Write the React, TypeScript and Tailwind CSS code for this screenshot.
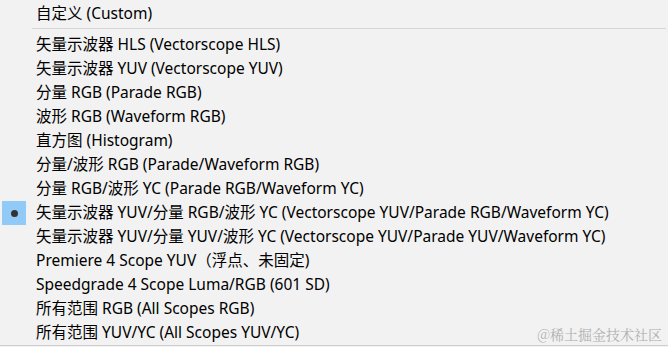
const items = [
  "矢量示波器 HLS (Vectorscope HLS)",
  "矢量示波器 YUV (Vectorscope YUV)",
  "分量 RGB (Parade RGB)",
  "波形 RGB (Waveform RGB)",
  "直方图 (Histogram)",
  "分量/波形 RGB (Parade/Waveform RGB)",
  "分量 RGB/波形 YC (Parade RGB/Waveform YC)",
  "矢量示波器 YUV/分量 RGB/波形 YC (Vectorscope YUV/Parade RGB/Waveform YC)",
  "矢量示波器 YUV/分量 YUV/波形 YC (Vectorscope YUV/Parade YUV/Waveform YC)",
  "Premiere 4 Scope YUV（浮点、未固定)",
  "Speedgrade 4 Scope Luma/RGB (601 SD)",
  "所有范围 RGB (All Scopes RGB)",
  "所有范围 YUV/YC (All Scopes YUV/YC)",
];

const checked = 7;

function Row({ label, selected }: { label: string; selected?: boolean }) {
  return (
    <div className="flex h-[24px] items-center">
      <div className="flex w-[36px] shrink-0 items-center pl-[2px]">
        {selected && (
          <div className="flex h-[24px] w-[24px] items-center justify-center bg-[#91c9f7]">
            <div className="h-[7px] w-[7px] rounded-full bg-[#333]"></div>
          </div>
        )}
      </div>
      <span className="whitespace-nowrap">{label}</span>
    </div>
  );
}

export default function App() {
  return (
    <div
      className="relative h-[347px] w-[668px] overflow-hidden bg-[#f2f2f2] text-[15.5px] leading-none text-black"
      style={{ fontFamily: '"Noto Sans", "Noto Sans CJK SC", sans-serif' }}
    >
      <div className="border-b border-[#cfcfcf] pt-[2px]">
        <Row label="自定义 (Custom)" />
        <div className="mb-[4px] ml-[32px] mr-[2px] mt-[2px] h-px bg-[#d5d5d5]"></div>
        {items.map((t, i) => (
          <Row key={t} label={t} selected={i === checked} />
        ))}
      </div>
      <div
        className="absolute bottom-[6px] right-[6px] text-[14px] text-[#b0b0b0]"
        style={{ fontFamily: '"Noto Serif CJK SC", "Noto Sans CJK SC", serif' }}
      >
        @稀土掘金技术社区
      </div>
    </div>
  );
}
